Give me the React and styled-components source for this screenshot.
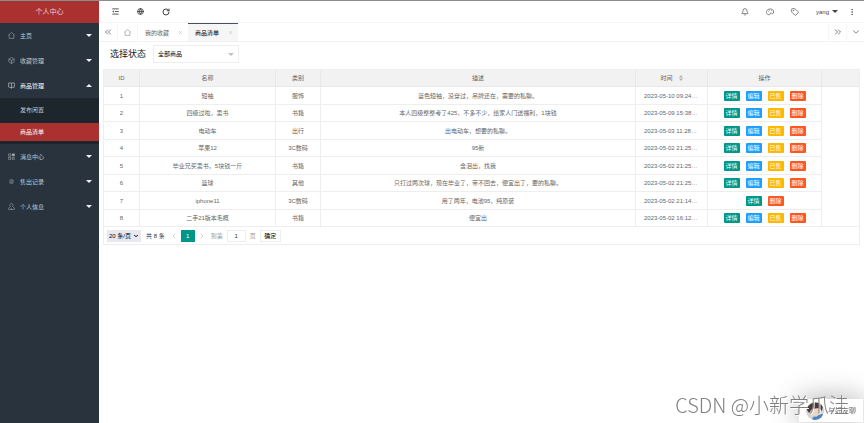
import React, { useState } from 'react';
import styled, { createGlobalStyle, css } from 'styled-components';
import {
  Bell,
  BookOpen,
  Box,
  ChevronDown,
  ChevronLeft,
  ChevronRight,
  ChevronsLeft,
  ChevronsRight,
  EllipsisVertical,
  FileText,
  Globe,
  RotateCw,
  Tag,
  X,
} from 'lucide-react';

function LineIcon({ size, strokeWidth, children }) {
  return (
    <svg
      width={size}
      height={size}
      viewBox="0 0 24 24"
      fill="none"
      stroke="currentColor"
      strokeWidth={strokeWidth}
      strokeLinejoin="round"
    >
      {children}
    </svg>
  );
}

function HomeIcon(props) {
  return (
    <LineIcon {...props}>
      <path d="M1 11 12 2l11 9M4 9v13h16V9" />
    </LineIcon>
  );
}

function ShrinkIcon(props) {
  return (
    <LineIcon {...props}>
      <path d="M1 3h22M10 12h13M1 21h22" />
      <path d="M6 8v8l-5-4z" fill="currentColor" stroke="none" />
    </LineIcon>
  );
}

function ThemeIcon(props) {
  return (
    <LineIcon {...props}>
      <path d="M8 20C2 19 0 15 1 11 3 5 8 3 13 3c6 0 10 4 10 9 0 6-5 6-6 4s-4-2-4 1c0 2-2 3-5 3z" />
      <path d="M6 11h2M10 7h2M16 8h2" />
    </LineIcon>
  );
}

function MessageIcon(props) {
  return (
    <LineIcon {...props}>
      <path d="M2 3h8v8H2zM2 15h8v7H2zM15 15h7v7h-7z" />
      <path d="M14 2h9v9h-9z" fill="currentColor" stroke="none" />
    </LineIcon>
  );
}

function PersonIcon(props) {
  return (
    <LineIcon {...props}>
      <path d="M8 12C5 7 7 2 12 2s7 5 4 10l6 6v4H2v-4zM12 22v-5" />
    </LineIcon>
  );
}

const menus = [
  { title: '主页', icon: HomeIcon },
  { title: '收藏管理', icon: Box },
  {
    title: '商品管理',
    icon: BookOpen,
    children: ['发布闲置', '商品清单'],
  },
  { title: '消息中心', icon: MessageIcon },
  { title: '售出记录', icon: FileText, iconSize: 5 },
  { title: '个人信息', icon: PersonIcon },
];

const goods = [
  { id: 1, name: '短袖', type: '服饰', desc: '蓝色短袖，没穿过，吊牌还在，需要的私聊。', time: '2023-05-10 09:24:10' },
  { id: 2, name: '四级过啦，卖书', type: '书籍', desc: '本人四级整整考了425，不多不少，给家人门送福利，1块钱', time: '2023-05-09 15:38:21' },
  { id: 3, name: '电动车', type: '出行', desc: '出电动车，想要的私聊。', time: '2023-05-03 11:28:45' },
  { id: 4, name: '苹果12', type: '3C数码', desc: '95新', time: '2023-05-02 21:25:50' },
  { id: 5, name: '毕业兄买卖书，5块钱一斤', type: '书籍', desc: '含泪出，找我', time: '2023-05-02 21:25:36' },
  { id: 6, name: '篮球', type: '其他', desc: '只打过两次球，现在毕业了，带不回去，便宜出了，要的私聊。', time: '2023-05-02 21:25:12' },
  { id: 7, name: 'iphone11', type: '3C数码', desc: '用了两年，电池95，纯原装', time: '2023-05-02 21:14:33', sold: true },
  { id: 8, name: '二手21版本毛概', type: '书籍', desc: '便宜出', time: '2023-05-02 16:12:08' },
];

const actions = [
  { label: '详情', color: '#009688' },
  { label: '编辑', color: '#1e9fff', onSaleOnly: true },
  { label: '已售', color: '#ffb800', onSaleOnly: true },
  { label: '删除', color: '#ff5722' },
];

function SideMenu() {
  const [active, setActive] = useState('商品清单');
  const [openMenu, setOpenMenu] = useState('商品管理');

  return (
    <Side>
      <Logo>个人中心</Logo>
      <nav>
        {menus.map(({ title, icon: Icon, iconSize = 7, children }) => {
          const open = !!children && openMenu === title;
          return (
            <React.Fragment key={title}>
              <MenuButton
                type="button"
                $open={open}
                onClick={() => setOpenMenu(open ? '' : title)}
              >
                <MenuIcon>
                  <Icon size={iconSize} strokeWidth={2} />
                </MenuIcon>
                <MenuTitle>{title}</MenuTitle>
                <Caret $up={open} />
              </MenuButton>
              {open && (
                <SubMenu>
                  {children.map(item => (
                    <SubLink
                      key={item}
                      href="#"
                      $active={item === active}
                      onClick={() => setActive(item)}
                    >
                      {item}
                    </SubLink>
                  ))}
                </SubMenu>
              )}
            </React.Fragment>
          );
        })}
      </nav>
    </Side>
  );
}

function TopBar() {
  return (
    <Header>
      <IconButton type="button" aria-label="收起菜单">
        <ShrinkIcon size={7} strokeWidth={3} />
      </IconButton>
      <IconButton type="button" aria-label="前台">
        <Globe size={7} strokeWidth={3} />
      </IconButton>
      <IconButton type="button" aria-label="刷新">
        <RotateCw size={8} strokeWidth={3} />
      </IconButton>
      <Spacer />
      <IconButton type="button" aria-label="通知">
        <Bell size={8} strokeWidth={2} />
      </IconButton>
      <IconButton type="button" aria-label="主题">
        <ThemeIcon size={8} strokeWidth={2} />
      </IconButton>
      <IconButton type="button" aria-label="便签">
        <Tag size={8} strokeWidth={2} />
      </IconButton>
      <UserButton type="button">
        yang
        <Caret />
      </UserButton>
      <MoreButton type="button" aria-label="更多">
        <EllipsisVertical size={8} strokeWidth={2} />
      </MoreButton>
    </Header>
  );
}

function PageTabs() {
  return (
    <Tabs>
      <TabControl type="button" aria-label="向左">
        <ChevronsLeft size={10} strokeWidth={2} />
      </TabControl>
      <HomeTab href="#" aria-label="首页">
        <HomeIcon size={7} strokeWidth={2} />
      </HomeTab>
      <Tab href="#">
        我的收藏
        <X size={5} strokeWidth={2} />
      </Tab>
      <Tab href="#" $active>
        商品清单
        <X size={5} strokeWidth={2} />
      </Tab>
      <Spacer />
      <TabControl type="button" aria-label="向右" $divided>
        <ChevronsRight size={10} strokeWidth={2} />
      </TabControl>
      <TabControl type="button" aria-label="标签操作" $divided>
        <ChevronDown size={10} strokeWidth={2} />
      </TabControl>
    </Tabs>
  );
}

function GoodsTable() {
  return (
    <Table>
      <colgroup>
        <Col $width={36} />
        <Col $width={136} />
        <Col $width={45} />
        <col />
        <Col $width={72} />
        <Col $width={114} />
        <Col $width={37} />
      </colgroup>
      <thead>
        <tr>
          <th>ID</th>
          <th>名称</th>
          <th>类别</th>
          <th>描述</th>
          <th>
            <SortLabel>
              时间
              <SortIcon viewBox="0 0 4 6">
                <path d="M0 2.5 2 0l2 2.5zM0 3.5 2 6l2-2.5z" />
              </SortIcon>
            </SortLabel>
          </th>
          <th>操作</th>
          <th />
        </tr>
      </thead>
      <tbody>
        {goods.map(({ id, name, type, desc, time, sold }) => (
          <tr key={id}>
            <td>{id}</td>
            <td>{name}</td>
            <td>{type}</td>
            <td>{desc}</td>
            <TimeCell>{time}</TimeCell>
            <td>
              <Actions>
                {actions
                  .filter(({ onSaleOnly }) => !(sold && onSaleOnly))
                  .map(({ label, color }) => (
                    <ActionButton key={label} type="button" $color={color}>
                      {label}
                    </ActionButton>
                  ))}
              </Actions>
            </td>
            <BlankCell />
          </tr>
        ))}
      </tbody>
    </Table>
  );
}

function Pager() {
  return (
    <PagerBar>
      <SelectBox>
        <PageSize aria-label="每页条数" defaultValue="20">
          <option value="10">10 条/页</option>
          <option value="20">20 条/页</option>
          <option value="50">50 条/页</option>
        </PageSize>
        <ChevronDown size={6} strokeWidth={4} />
      </SelectBox>
      <Total>共 8 条</Total>
      <PageArrow type="button" aria-label="上一页">
        <ChevronLeft size={8} strokeWidth={2} />
      </PageArrow>
      <PageNumber type="button">1</PageNumber>
      <PageArrow type="button" aria-label="下一页">
        <ChevronRight size={8} strokeWidth={2} />
      </PageArrow>
      <JumpLabel>
        到第
        <JumpInput type="text" defaultValue="1" />
        页
      </JumpLabel>
      <Confirm type="button">确定</Confirm>
    </PagerBar>
  );
}

function ChatWidget() {
  return (
    <Chat type="button">
      <Avatar viewBox="0 0 18 18">
        <clipPath id="avatar">
          <circle cx="9" cy="9" r="9" />
        </clipPath>
        <g clipPath="url(#avatar)">
          <rect width="18" height="18" fill="#d9d3ce" />
          <path d="M6 18c0-3 5-6 10-6l2 1v5z" fill="#4b83c9" />
          <path d="M4 7c0-3 9-4 11 0l-1 5-4 3-5-3z" fill="#ecd5c4" />
          <path d="M1 8C1 0 14-2 17 4l-1 5-3-3-7 1-3 4z" fill="#4a3a39" />
        </g>
      </Avatar>
      与好友聊
    </Chat>
  );
}

function App() {
  return (
    <>
      <GlobalStyle />
      <Layout>
        <SideMenu />
        <Main>
          <TopBar />
          <PageTabs />
          <Filter>
            <label htmlFor="status">选择状态</label>
            <StatusBox>
              <StatusSelect id="status" defaultValue="all">
                <option value="all">全部商品</option>
                <option value="sale">在售</option>
                <option value="sold">已售</option>
              </StatusSelect>
              <Caret $muted />
            </StatusBox>
          </Filter>
          <TableView>
            <GoodsTable />
            <Pager />
          </TableView>
        </Main>
      </Layout>
      <ChatWidget />
      <Watermark>CSDN @小新学爪洼</Watermark>
    </>
  );
}

const GlobalStyle = createGlobalStyle`
  * {
    box-sizing: border-box;
  }

  body {
    margin: 0;
    color: #666;
    background-color: #fff;
    font: 6px/10px 'Liberation Sans', 'Noto Sans CJK SC', sans-serif;
  }

  button,
  input,
  select {
    margin: 0;
    padding: 0;
    border: none;
    color: inherit;
    background: none;
    font: inherit;
    outline: none;
    appearance: none;
  }

  button {
    cursor: pointer;
  }

  a {
    color: inherit;
    text-decoration: none;
  }
`;

const Layout = styled.div`
  display: flex;
  min-height: 100vh;
  border-top: 1px solid #8c8c8c;
`;

const Side = styled.aside`
  flex: 0 0 99px;
  color: #c3c7ca;
  background-color: #28333e;
`;

const Logo = styled.div`
  display: flex;
  align-items: center;
  justify-content: center;
  height: 22px;
  color: #e6cccc;
  background-color: #aa3130;
  font-size: 7px;
`;

const Caret = styled.i`
  width: 6px;
  border: 3px solid transparent;
  border-top-color: currentColor;
  border-bottom-width: 0;

  ${({ $up }) =>
    $up &&
    css`
      border-top-width: 0;
      border-bottom: 3px solid currentColor;
    `}

  ${({ $muted }) =>
    $muted &&
    css`
      color: #c2c2c2;
    `}
`;

const MenuButton = styled.button`
  display: flex;
  align-items: center;
  gap: 5px;
  width: 100%;
  height: 25px;
  padding: 0 7px 0 8px;
  color: ${({ $open }) => ($open ? '#fff' : 'inherit')};

  & i {
    color: #f0f1f2;
  }
`;

const MenuIcon = styled.span`
  display: flex;
  justify-content: center;
  width: 7px;
  opacity: 0.8;
`;

const MenuTitle = styled.span`
  flex-grow: 1;
  text-align: left;
`;

const SubMenu = styled.div`
  display: flex;
  flex-direction: column;
  gap: 4px;
  padding: 3px 0;
  background-color: #1d262d;
`;

const SubLink = styled.a`
  height: 18px;
  padding-left: 20px;
  color: ${({ $active }) => ($active ? '#fff' : 'inherit')};
  background-color: ${({ $active }) => ($active ? '#aa3130' : 'transparent')};
  line-height: 18px;
`;

const Main = styled.main`
  flex: 1;
  min-width: 0;
`;

const Header = styled.header`
  display: flex;
  align-items: center;
  height: 22px;
  padding: 0 8px 0 4px;
  border-bottom: 1px solid #f6f6f6;
  color: #444;
`;

const Spacer = styled.div`
  flex: 1;
`;

const IconButton = styled.button`
  display: flex;
  align-items: center;
  justify-content: center;
  width: 25px;
  height: 100%;
`;

const UserButton = styled.button`
  display: flex;
  align-items: center;
  gap: 3px;
  padding: 0 10px 0 8px;
`;

const MoreButton = styled.button`
  display: flex;
`;

const Tabs = styled.div`
  display: flex;
  height: 19px;
  border-bottom: 1px solid #f2f2f2;
  color: #666;
`;

const TabControl = styled.button`
  display: flex;
  align-items: center;
  justify-content: center;
  width: 18px;
  border-left: ${({ $divided }) => ($divided ? '1px solid #f6f6f6' : 'none')};
`;

const HomeTab = styled.a`
  display: flex;
  align-items: center;
  justify-content: center;
  width: 21px;
  border: solid #f6f6f6;
  border-width: 0 1px;
  color: #888;
`;

const Tab = styled.a`
  display: flex;
  align-items: center;
  justify-content: space-between;
  width: 50px;
  padding: 0 5px 0 7px;
  border-top: 1px solid ${({ $active }) => ($active ? '#4a5058' : 'transparent')};
  color: ${({ $active }) => ($active ? '#000' : '#666')};
  background-color: ${({ $active }) => ($active ? '#f6f6f6' : 'transparent')};

  & svg {
    color: #aaa;
  }
`;

const Filter = styled.div`
  display: flex;
  align-items: center;
  gap: 7px;
  padding: 3px 11px 6px;

  & label {
    color: #222;
    font-size: 9px;
  }
`;

const StatusBox = styled.div`
  display: grid;
  grid-template-columns: 1fr 10px;
  align-items: center;
  width: 86px;
  height: 18px;
  border: 1px solid #eee;
`;

const StatusSelect = styled.select`
  grid-area: 1 / 1 / 2 / 3;
  height: 16px;
  padding-left: 4px;
  color: #000;

  & + i {
    grid-area: 1 / 2;
    pointer-events: none;
  }
`;

const TableView = styled.section`
  margin: 0 4px;
  border: 1px solid #eee;
`;

const Table = styled.table`
  width: 100%;
  table-layout: fixed;
  border-collapse: separate;
  border-spacing: 0;

  & th,
  & td {
    height: 18px;
    padding: 0 6px;
    border: solid #eee;
    border-width: 0 1px 1px 0;
    font-weight: normal;
    text-align: center;
    white-space: nowrap;
  }

  & th {
    height: 17px;
    background-color: #f2f2f2;
    border-color: #e8e8e8;
  }

  & tbody tr:nth-child(even) td {
    height: 17px;
  }

  & th:last-child,
  & td:last-child {
    border-right: none;
  }
`;

const Col = styled.col`
  width: ${({ $width }) => $width}px;
`;

const TimeCell = styled.td`
  && {
    overflow: hidden;
    padding: 0 9px 0 8px;
    text-overflow: ellipsis;
  }
`;

const BlankCell = styled.td`
  && {
    border-bottom-color: transparent;
  }

  tr:last-child > && {
    border-bottom-color: #eee;
  }
`;

const SortLabel = styled.span`
  display: inline-flex;
  align-items: center;
  gap: 6px;
`;

const SortIcon = styled.svg`
  width: 4px;
  height: 6px;
  fill: #b2b2b2;
`;

const Actions = styled.div`
  display: flex;
  justify-content: center;
  gap: 6px;
`;

const ActionButton = styled.button`
  width: 16px;
  height: 10px;
  border-radius: 1px;
  color: #fff;
  background-color: ${({ $color }) => $color};
`;

const PagerBar = styled.div`
  display: flex;
  align-items: center;
  height: 17px;
  padding-left: 3px;
  color: #333;
`;

const SelectBox = styled.div`
  display: grid;
  grid-template-columns: 1fr 8px;
  align-items: center;
  width: 34px;
  height: 12px;
  margin-right: 5px;
  background-color: #e9e9ed;
  color: #000;

  & svg {
    grid-area: 1 / 2;
    pointer-events: none;
  }
`;

const PageSize = styled.select`
  grid-area: 1 / 1 / 2 / 3;
  padding-left: 2px;
`;

const Total = styled.span`
  margin-right: 2px;
`;

const PageArrow = styled.button`
  display: flex;
  justify-content: center;
  width: 14px;
  color: #bbb;
`;

const PageNumber = styled.button`
  width: 14px;
  height: 12px;
  color: #fff;
  background-color: #009688;
`;

const JumpLabel = styled.label`
  display: flex;
  align-items: center;
  gap: 4px;
  margin: 0 4px 0 2px;
  color: #999;
`;

const JumpInput = styled.input`
  width: 19px;
  height: 12px;
  border: 1px solid #eee;
  color: #333;
  text-align: center;
`;

const Confirm = styled.button`
  width: 21px;
  height: 12px;
  border: 1px solid #eee;
  color: #000;
`;

const Chat = styled.button`
  position: fixed;
  right: 1px;
  bottom: 1px;
  display: flex;
  align-items: center;
  gap: 4px;
  width: 64px;
  height: 23px;
  padding-left: 7px;
  color: #666;
  background-color: #fff;
  box-shadow: 0 0 28px rgba(0, 0, 0, 0.35);
  font-size: 7px;
`;

const Avatar = styled.svg`
  width: 18px;
  height: 18px;
`;

const Watermark = styled.div`
  position: fixed;
  right: 15px;
  bottom: 4px;
  color: #808080;
  font: 300 20px/28px 'Noto Sans CJK SC', sans-serif;
  text-shadow: 1px 1px 0 #fff;
  pointer-events: none;
`;

export default App;
